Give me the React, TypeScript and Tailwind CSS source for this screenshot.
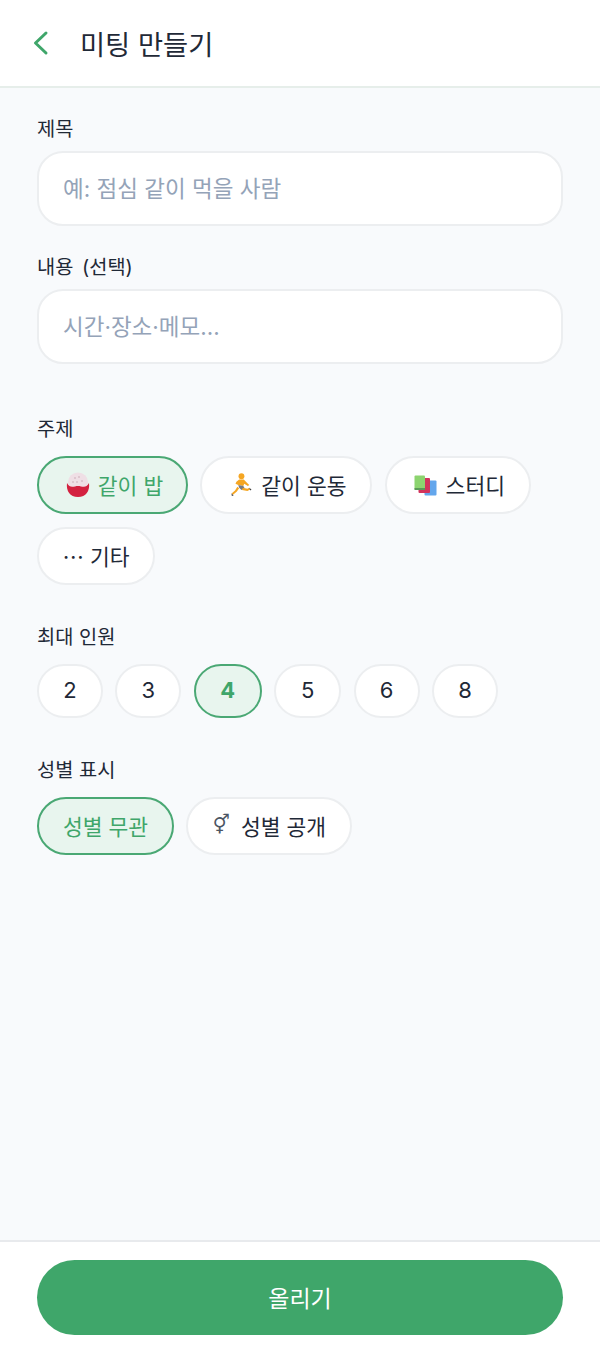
import React from "react";

const base =
  "flex items-center justify-center rounded-full border-2 whitespace-nowrap";
const on = "border-[#4aa874] bg-[#e8f5ee] text-[#3fa66a]";
const off = "border-[#eceef0] bg-white text-[#1f2937]";

function Rice() {
  return (
    <svg width="24" height="26" viewBox="0 0 24 26" className="shrink-0 mb-[4px]">
      <ellipse cx="12" cy="10" rx="10" ry="9.5" fill="#efdfe5" />
      <circle cx="9" cy="6" r="0.8" fill="#c9a9b4" />
      <circle cx="13" cy="5" r="0.8" fill="#c9a9b4" />
      <circle cx="16" cy="9" r="0.8" fill="#c9a9b4" />
      <circle cx="11" cy="10" r="0.8" fill="#c9a9b4" />
      <circle cx="7" cy="10" r="0.8" fill="#c9a9b4" />
      <path d="M1 11 C4 17 8 14 12 14 C16 14 20 17 23 11 C24 19 20 25 12 25 C4 25 0 19 1 11Z" fill="#d3213f" />
    </svg>
  );
}

function Runner() {
  return (
    <svg width="22" height="24" viewBox="0 0 24 26" className="shrink-0 mb-[4px]">
      <circle cx="12.5" cy="3.5" r="3.2" fill="#f5a623" />
      <path d="M10 7 L15 7 L19 11 L21 13 L19.5 14 L15.5 11.5 L14.5 14 L9 13 L6 11.5 L7 9.5 Z" fill="#f5a623" />
      <path d="M9 13 L14.5 14 L16 16.5 L12.5 18.5 L10 16 Z" fill="#777a80" />
      <path d="M10 16.5 L7.5 20 L3 24 L2 22 L5.5 19 L8 15 Z" fill="#f5a623" />
      <path d="M14 16 L19 17 L21 16 L22 18 L19 19.5 L13 18.5 Z" fill="#f5a623" />
      <path d="M1.5 22 L4 24.5 L2 25 Z" fill="#444" />
      <path d="M21 16 L23.5 18 L22 19 Z" fill="#444" />
    </svg>
  );
}

function Books() {
  return (
    <svg width="23" height="21" viewBox="0 0 23 21" className="shrink-0 mb-[3px]">
      <rect x="10.5" y="5.5" width="12" height="15" rx="1" fill="#63a6ec" />
      <rect x="4.5" y="3" width="11.5" height="15" rx="1" fill="#d2335c" />
      <rect x="0.5" y="0.5" width="10.5" height="14" rx="1" fill="#8cd46f" />
      <rect x="0.5" y="13" width="10.5" height="2" fill="#5a9a58" />
    </svg>
  );
}

function Chip({
  active,
  className,
  children,
}: {
  active?: boolean;
  className: string;
  children: React.ReactNode;
}) {
  return (
    <div className={`${base} ${active ? on : off} ${className}`}>{children}</div>
  );
}

function Field({ label, placeholder }: { label: string; placeholder: string }) {
  return (
    <div className="flex flex-col">
      <div className="text-[19.8px] leading-[29px] [word-spacing:3px] text-[#1f2937] mb-[7px]">{label}</div>
      <div className="h-[75px] rounded-[26px] border-2 border-[#eceef0] bg-white pl-[24px] pt-[1px] flex items-center text-[22.5px] text-[#94a3b8]">
        {placeholder}
      </div>
    </div>
  );
}

export default function App() {
  return (
    <div
      className="w-[600px] h-[1354px] flex flex-col bg-[#f8fafc] overflow-hidden"
      style={{ fontFamily: 'Inter, "Noto Sans CJK KR", sans-serif' }}
    >
      <header className="h-[88px] shrink-0 bg-white border-b-2 border-[#e6eeea] flex items-center pl-[30px] gap-[28px]">
        <svg width="22" height="26" viewBox="0 0 22 26" fill="none" className="shrink-0">
          <path d="M16 3 L5.5 13 L16 23" stroke="#3fa66a" strokeWidth="3" strokeLinecap="round" strokeLinejoin="round" />
        </svg>
        <div className="text-[27.3px] pt-[7px] text-[#1f2937]">미팅 만들기</div>
      </header>

      <main className="flex-1 px-[37px] pt-[27px] flex flex-col">
        <div className="flex flex-col gap-[27px]">
          <Field label="제목" placeholder="예: 점심 같이 먹을 사람" />
          <Field label="내용 (선택)" placeholder="시간·장소·메모..." />
        </div>

        <div className="mt-[51px] text-[19.8px] leading-[29px] text-[#1f2937]">주제</div>
        <div className="mt-[12px] flex flex-wrap gap-x-[12.4px] gap-y-[13px] text-[21.5px]">
          <Chip active className="h-[58px] w-[151px] pt-[3px] pl-[4px] gap-[8px]"><Rice />같이 밥</Chip>
          <Chip className="h-[58px] w-[172px] pt-[3px] pl-[4px] gap-[9px]"><Runner />같이 운동</Chip>
          <Chip className="h-[58px] w-[146px] pt-[3px] pl-[3px] gap-[9px]"><Books />스터디</Chip>
          <Chip className="h-[58px] w-[118px] pt-[3px] gap-[7px]">⋯ 기타</Chip>
        </div>

        <div className="mt-[38px] text-[19.8px] leading-[29px] text-[#1f2937]">최대 인원</div>
        <div className="mt-[12px] flex gap-[12.4px] text-[22px]">
          <Chip className="h-[54px] w-[66px] pb-[1px]">2</Chip>
          <Chip className="h-[54px] w-[66px] pb-[1px]">3</Chip>
          <Chip active className="h-[54px] w-[68px] pb-[1px] font-bold">4</Chip>
          <Chip className="h-[54px] w-[67px] pb-[1px]">5</Chip>
          <Chip className="h-[54px] w-[66px] pb-[1px]">6</Chip>
          <Chip className="h-[54px] w-[66px] pb-[1px]">8</Chip>
        </div>

        <div className="mt-[38px] text-[19.8px] leading-[29px] text-[#1f2937]">성별 표시</div>
        <div className="mt-[12px] flex gap-[12.4px] text-[21.5px]">
          <Chip active className="h-[58px] w-[137px] pt-[3px]">성별 무관</Chip>
          <Chip className="h-[58px] w-[166px] pt-[3px] gap-[11px]">
            <span className="text-[19px] text-[#4b5563] mb-[7px]" style={{ fontFamily: '"DejaVu Sans", sans-serif' }}>⚥</span>성별 공개
          </Chip>
        </div>
      </main>

      <footer className="h-[114px] shrink-0 border-t-2 border-[#e8eaed] bg-white px-[37px] pt-[18px]">
        <div className="h-[75px] rounded-full bg-[#3fa66a] text-white text-[23px] pt-[4px] flex items-center justify-center">
          올리기
        </div>
      </footer>
    </div>
  );
}
